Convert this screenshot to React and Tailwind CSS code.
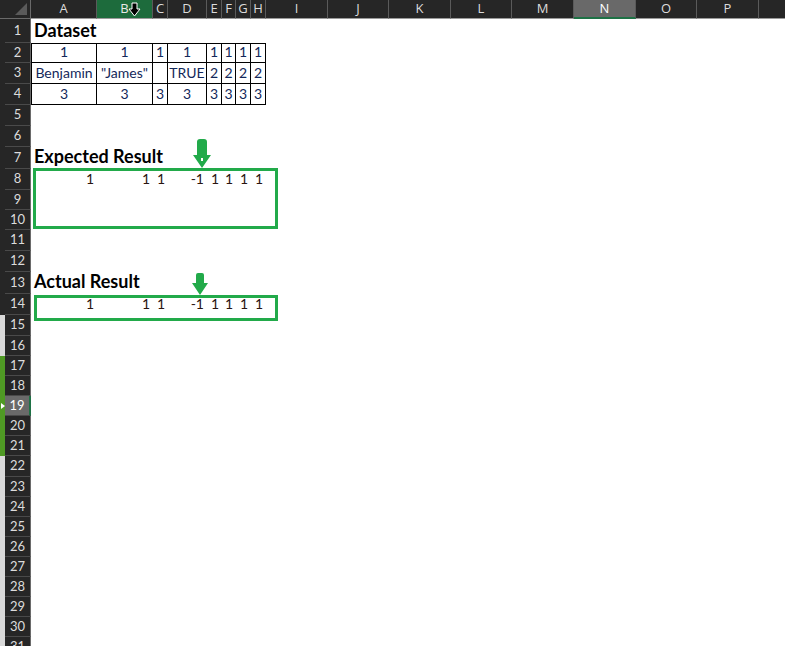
import React from 'react';

// column letters with their pixel widths (right gridline included)
const columns = [
    ['A', 66], ['B', 56], ['C', 15], ['D', 39], ['E', 15], ['F', 14], ['G', 15], ['H', 15],
    ['I', 62], ['J', 61], ['K', 62], ['L', 61], ['M', 62], ['N', 62], ['O', 61], ['P', 62], ['', 62],
];

// row heights, row 1 first
const rowHeights = [24, 20, 21, 21, 21, 21, 22, 21, 20, 20, 21, 21, 22, 21, 21, 20, 20, 20, 20, 20, 20, 21, 20, 20, 20, 20, 20, 20, 20, 20, 20];

const titles = { 1: 'Dataset', 7: 'Expected Result', 13: 'Actual Result' };

const dataset = {
    2: ['1', '1', '1', '1', '1', '1', '1', '1'],
    3: ['Benjamin', '"James"', '', 'TRUE', '2', '2', '2', '2'],
    4: ['3', '3', '3', '3', '3', '3', '3', '3'],
};

const resultRow = ['1', '1', '1', '-1', '1', '1', '1', '1'];

const DownArrow = ({ dot }) => (
    <svg width="18" height="29" viewBox="0 0 18 29">
        <path d="M4 3 Q4 0 7 0 L11 0 Q14 0 14 3 L14 16 L18 16 L9 29 L0 16 L4 16 Z" fill="#22aa4a" />
        {dot && <rect x="8" y="19" width="2" height="3" fill="#fff" />}
    </svg>
);

const SmallArrow = () => (
    <svg width="16" height="22" viewBox="0 0 16 22">
        <path d="M4 2 Q4 0 6 0 L10 0 Q12 0 12 2 L12 10 L16 10 L8 22 L0 10 L4 10 Z" fill="#22aa4a" />
    </svg>
);

const Cursor = () => (
    <svg width="13" height="15" viewBox="0 0 13 15">
        <path d="M4 1 L9 1 L9 7 L12 7 L6.5 14 L1 7 L4 7 Z" fill="#000" stroke="#fff" strokeWidth="1" />
    </svg>
);

const cellFont = { fontFamily: 'Lato, "Liberation Sans", sans-serif' };

const Cell = ({ col, rowNum }) => {
    const [letter, width] = col;
    const idx = columns.indexOf(col);
    let content = null;
    let cls = 'flex items-end h-full shrink-0 box-border';

    if (titles[rowNum] && letter === 'A') {
        content = <span className="whitespace-nowrap font-bold text-[18px] leading-none pl-[3px] pb-[4px] text-black">{titles[rowNum]}</span>;
    } else if (dataset[rowNum] && idx < 8) {
        cls += ' justify-center border-r border-b border-black';
        if (rowNum === 2) cls += ' border-t';
        if (idx === 0) cls += ' border-l';
        content = <span className="whitespace-nowrap text-[14px] leading-none pb-[3px] text-[#13285a]">{dataset[rowNum][idx]}</span>;
    } else if ((rowNum === 8 || rowNum === 14) && idx < 8) {
        cls += ' justify-end';
        content = <span className="whitespace-nowrap text-[14px] leading-none pb-[4px] pr-[3px] text-[#2a1410]">{resultRow[idx]}</span>;
    }

    return (
        <div className={cls} style={{ width }}>
            {content}
        </div>
    );
};

// the left edge strip: light from row 15 down, green behind rows 17-21
const stripClass = (n) => {
    if (n >= 17 && n <= 21) return 'bg-[#4f9a24]';
    if (n >= 15) return 'bg-[#d9d9d9]';
    return 'bg-[#262626]';
};

const RowHeader = ({ n, h }) => {
    const selected = n === 19;
    return (
        <div className="flex h-full shrink-0 w-[31px]">
            <div className={`relative w-[5px] h-full ${stripClass(n)}`}>
                {selected && (
                    <div className="absolute left-[1px] top-[7px] w-0 h-0 border-t-[3px] border-t-transparent border-b-[3px] border-b-transparent border-l-[4px] border-l-white" />
                )}
            </div>
            <div
                className={`flex-1 flex items-center justify-center border-b border-[#4a4a4a] box-border text-[13px] ${
                    selected ? 'bg-[#6a6a6a] border-r-2 border-r-[#1e7145] text-white' : 'bg-[#262626] border-r border-r-[#6a6a6a] text-[#dcdcdc]'
                }`}
                style={{ height: h }}
            >
                {n}
            </div>
        </div>
    );
};

export default function App() {
    return (
        <div className="w-[785px] h-[646px] overflow-hidden bg-white relative" style={{ fontFamily: '"Open Sans", "Liberation Sans", sans-serif' }}>
            {/* column headers */}
            <div className="flex h-[19px]">
                <div className="w-[31px] shrink-0 h-full bg-[#262626] border-r border-b border-[#6a6a6a] box-border relative overflow-hidden">
                    <div className="absolute right-[3px] bottom-[3px] w-0 h-0 border-l-[12px] border-l-transparent border-b-[12px] border-b-[#5a5a5a]" />
                </div>
                {columns.map(([letter, width], i) => {
                    let bg = 'bg-[#262626] text-[#dcdcdc] border-b border-b-[#9a9a9a]';
                    if (letter === 'B') bg = 'bg-[#1d6b3c] text-[#e8e8e8] border-b border-b-[#9a9a9a]';
                    if (letter === 'N') bg = 'bg-[#696969] text-white border-b-2 border-b-[#1e7145]';
                    return (
                        <div
                            key={i}
                            className={`relative shrink-0 h-full box-border border-r border-r-[#5a5a5a] flex items-center justify-center text-[13px] ${bg}`}
                            style={{ width }}
                        >
                            {letter}
                            {letter === 'B' && (
                                <div className="absolute left-[31px] top-[2px]">
                                    <Cursor />
                                </div>
                            )}
                        </div>
                    );
                })}
            </div>

            {/* sheet body */}
            <div className="flex flex-col" style={cellFont}>
                {rowHeights.map((h, i) => (
                    <div key={i} className="flex shrink-0" style={{ height: h }}>
                        <RowHeader n={i + 1} h={h} />
                        {columns.map((col, j) => (
                            <Cell key={j} col={col} rowNum={i + 1} />
                        ))}
                    </div>
                ))}
            </div>

            {/* highlight boxes and arrows drawn over the sheet */}
            <div className="absolute left-[33px] top-[168px] w-[245px] h-[61px] border-[3px] border-[#22aa4a]" />
            <div className="absolute left-[34px] top-[295px] w-[244px] h-[26px] border-[3px] border-[#22aa4a]" />
            <div className="absolute left-[193px] top-[139px]">
                <DownArrow dot />
            </div>
            <div className="absolute left-[192px] top-[273px]">
                <SmallArrow />
            </div>
        </div>
    );
}
